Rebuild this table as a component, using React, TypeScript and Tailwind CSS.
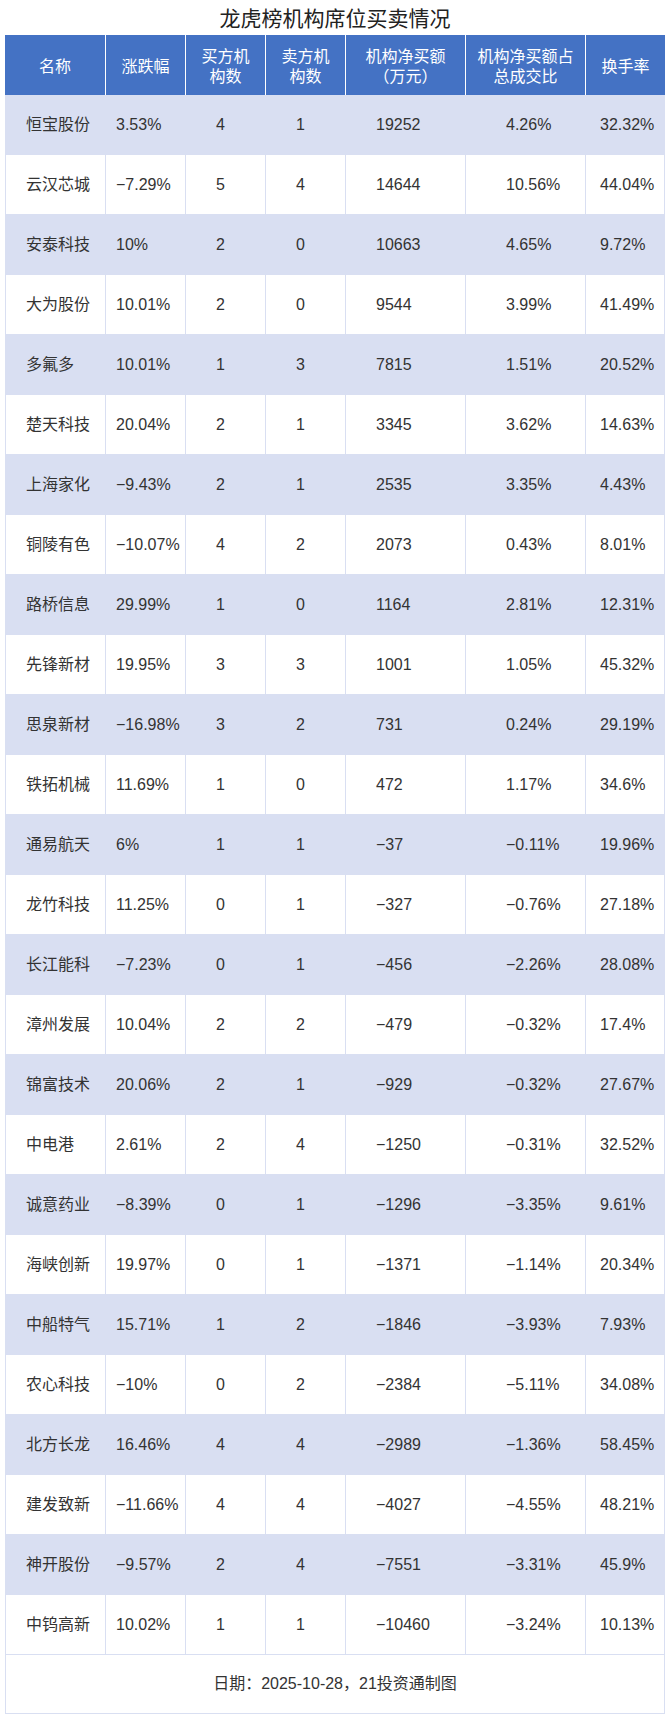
import React from "react";

type Row = [string, string, string, string, string, string, string];

const rows: Row[] = [
  ["恒宝股份", "3.53%", "4", "1", "19252", "4.26%", "32.32%"],
  ["云汉芯城", "−7.29%", "5", "4", "14644", "10.56%", "44.04%"],
  ["安泰科技", "10%", "2", "0", "10663", "4.65%", "9.72%"],
  ["大为股份", "10.01%", "2", "0", "9544", "3.99%", "41.49%"],
  ["多氟多", "10.01%", "1", "3", "7815", "1.51%", "20.52%"],
  ["楚天科技", "20.04%", "2", "1", "3345", "3.62%", "14.63%"],
  ["上海家化", "−9.43%", "2", "1", "2535", "3.35%", "4.43%"],
  ["铜陵有色", "−10.07%", "4", "2", "2073", "0.43%", "8.01%"],
  ["路桥信息", "29.99%", "1", "0", "1164", "2.81%", "12.31%"],
  ["先锋新材", "19.95%", "3", "3", "1001", "1.05%", "45.32%"],
  ["思泉新材", "−16.98%", "3", "2", "731", "0.24%", "29.19%"],
  ["铁拓机械", "11.69%", "1", "0", "472", "1.17%", "34.6%"],
  ["通易航天", "6%", "1", "1", "−37", "−0.11%", "19.96%"],
  ["龙竹科技", "11.25%", "0", "1", "−327", "−0.76%", "27.18%"],
  ["长江能科", "−7.23%", "0", "1", "−456", "−2.26%", "28.08%"],
  ["漳州发展", "10.04%", "2", "2", "−479", "−0.32%", "17.4%"],
  ["锦富技术", "20.06%", "2", "1", "−929", "−0.32%", "27.67%"],
  ["中电港", "2.61%", "2", "4", "−1250", "−0.31%", "32.52%"],
  ["诚意药业", "−8.39%", "0", "1", "−1296", "−3.35%", "9.61%"],
  ["海峡创新", "19.97%", "0", "1", "−1371", "−1.14%", "20.34%"],
  ["中船特气", "15.71%", "1", "2", "−1846", "−3.93%", "7.93%"],
  ["农心科技", "−10%", "0", "2", "−2384", "−5.11%", "34.08%"],
  ["北方长龙", "16.46%", "4", "4", "−2989", "−1.36%", "58.45%"],
  ["建发致新", "−11.66%", "4", "4", "−4027", "−4.55%", "48.21%"],
  ["神开股份", "−9.57%", "2", "4", "−7551", "−3.31%", "45.9%"],
  ["中钨高新", "10.02%", "1", "1", "−10460", "−3.24%", "10.13%"],
];

/* column widths + left indents, spelled out so tailwind picks them up */
const cellCls = [
  "w-[99px] pl-[20px]",
  "w-[80px] pl-[10px] border-l",
  "w-[80px] pl-[30px] border-l",
  "w-[80px] pl-[30px] border-l",
  "w-[120px] pl-[30px] border-l",
  "w-[120px] pl-[40px] border-l",
  "w-[80px] pl-[14px] border-l",
];

const headWidth = ["w-[100px]", "w-[80px]", "w-[80px]", "w-[80px]", "w-[120px]", "w-[120px]", "w-[80px]"];

const headers: React.ReactNode[][] = [
  ["名称"],
  ["涨跌幅"],
  ["买方机", "构数"],
  ["卖方机", "构数"],
  [
    "机构净买额",
    <>
      <span className="inline-block w-[16px] text-right">（</span>万元
      <span className="inline-block w-[16px] text-left">）</span>
    </>,
  ],
  ["机构净买额占", "总成交比"],
  ["换手率"],
];

export default function App() {
  return (
    <main
      className="w-[670px] h-[1720px] bg-white text-[#333333]"
      style={{ fontFamily: '"Liberation Sans", "Noto Sans CJK SC", sans-serif' }}
    >
      <h1 className="h-[35px] flex items-center justify-center text-[21px] leading-none text-[#222222] pt-[2px]">
        龙虎榜机构席位买卖情况
      </h1>

      <div className="mx-[5px] w-[660px]">
        {/* ---- header ---- */}
        <div
          className="flex h-[60px] bg-[#4472c4] text-white"
          style={{ fontFamily: '"Noto Sans CJK SC", sans-serif' }}
        >
          {headers.map((lines, i) => (
            <div
              key={i}
              className={`${headWidth[i]} box-border flex flex-col items-center justify-center text-[16px] ${
                i > 0 ? "border-l border-white" : ""
              }`}
            >
              {lines.map((l, j) => (
                <div key={j} className="h-[20px] leading-[20px] whitespace-nowrap">
                  {l}
                </div>
              ))}
            </div>
          ))}
        </div>

        {/* ---- body ---- */}
        <div className="border-l border-r border-[#d9dff2]">
          {rows.map((row, r) => (
            <div
              key={row[0]}
              className={`flex h-[60px] border-b border-[#d9dff2] ${r % 2 === 0 ? "bg-[#d9dff2]" : "bg-white"}`}
            >
              {row.map((v, c) => (
                <div
                  key={c}
                  className={`${cellCls[c]} box-border shrink-0 border-[#d9dff2] flex items-center text-[16px] whitespace-nowrap`}
                >
                  {v}
                </div>
              ))}
            </div>
          ))}

          {/* ---- footer ---- */}
          <div className="h-[59px] flex items-center justify-center text-[16px] border-b border-[#d9dff2]">
            日期：2025-10-28，21投资通制图
          </div>
        </div>
      </div>
    </main>
  );
}
